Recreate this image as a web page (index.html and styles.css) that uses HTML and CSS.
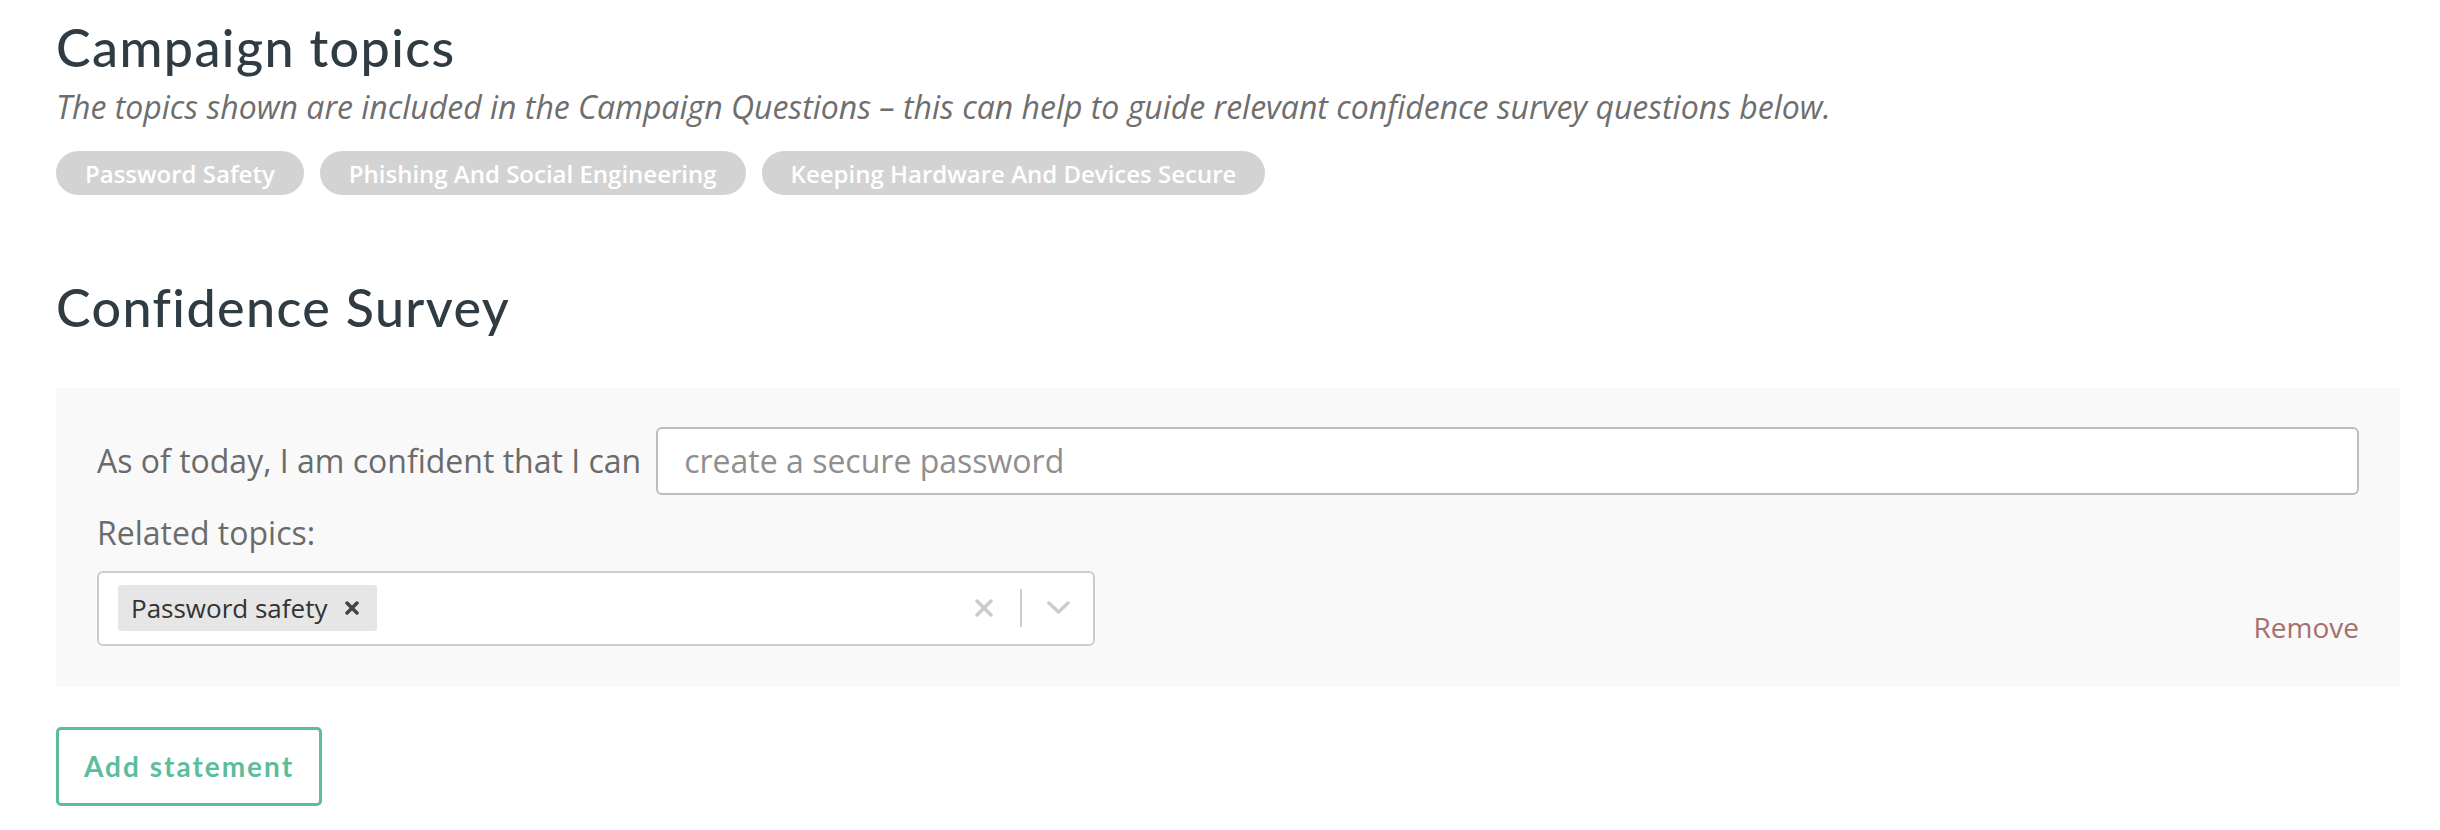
FILE: index.html
```html
<!DOCTYPE html>
<html lang="en">
<head>
  <meta charset="UTF-8">
  <title>Campaign confidence survey</title>
  <meta name="viewport" content="width=device-width, initial-scale=1.0">
  <link rel="stylesheet" href="styles.css">
</head>
<body>
  <div class="page">
    <section class="topics">
      <h2>Campaign topics</h2>
      <p class="hint">The topics shown are included in the Campaign Questions – this can help to guide relevant confidence survey questions below.</p>
      <div class="chips">
        <span class="chip">Password Safety</span>
        <span class="chip">Phishing And Social Engineering</span>
        <span class="chip">Keeping Hardware And Devices Secure</span>
      </div>
    </section>

    <section class="survey">
      <h2>Confidence Survey</h2>

      <div class="statement">
        <div class="statement-row">
          <label for="statement-1">As of today, I am confident that I can</label>
          <input id="statement-1" type="text" placeholder="create a secure password">
        </div>

        <div class="statement-footer">
          <div class="topics-field">
            <div class="field-label">Related topics:</div>
            <div class="select">
              <div class="select-values">
                <span class="tag">
                  <span class="tag-label">Password safety</span>
                  <span class="tag-remove">
                    <svg width="14" height="14" viewBox="0 0 14 14"><path d="M2 2 L12 12 M12 2 L2 12" stroke="#444444" stroke-width="3.5" stroke-linecap="round"/></svg>
                  </span>
                </span>
              </div>
              <div class="select-indicators">
                <span class="indicator">
                  <svg width="18" height="18" viewBox="0 0 18 18"><path d="M2 2 L16 16 M16 2 L2 16" stroke="#cccccc" stroke-width="3.5" stroke-linecap="round"/></svg>
                </span>
                <span class="separator"></span>
                <span class="indicator">
                  <svg width="23" height="14" viewBox="0 0 23 14"><path d="M2 2 L11.5 11 L21 2" fill="none" stroke="#cccccc" stroke-width="3.5" stroke-linecap="round" stroke-linejoin="round"/></svg>
                </span>
              </div>
            </div>
          </div>
          <a class="remove" href="#">Remove</a>
        </div>
      </div>

      <button class="btn-outline" type="button">Add statement</button>
    </section>
  </div>
</body>
</html>
```

FILE: styles.css
```css
:root {
  --ink: #2f3c43;
  --muted: #6b6b6b;
  --line: #cccccc;
  --teal: #5cbd9d;
}

* {
  margin: 0;
  padding: 0;
  box-sizing: border-box;
}

body {
  background: #ffffff;
  font-family: 'Open Sans', sans-serif;
  color: var(--muted);
}

.page {
  padding: 16px 40px 0 56px;
}

h2 {
  font-family: 'Lato', sans-serif;
  font-weight: 500;
  font-size: 52px;
  line-height: 1.2;
  letter-spacing: 1.4px;
  color: var(--ink);
}

.hint {
  margin-top: 7px;
  font-size: 32px;
  font-style: italic;
  color: #6e6e6e;
}

.chips {
  display: flex;
  gap: 16px;
  margin-top: 23px;
}

.chip {
  display: inline-flex;
  align-items: center;
  height: 44px;
  padding: 0 29px;
  border-radius: 22px;
  background: #d3d3d3;
  color: #ffffff;
  font-size: 24px;
  font-weight: 600;
}

.survey {
  margin-top: 81px;
}

/* one statement card */
.statement {
  margin-top: 49px;
  padding: 39px 41px 41px;
  background: #f9f9f9;
}

.statement-row {
  display: flex;
  align-items: center;
  gap: 15px;
}

.statement-row label,
.field-label {
  font-size: 32px;
  color: var(--muted);
  white-space: nowrap;
}

.statement-row input {
  flex: 1;
  height: 68px;
  padding: 0 26px;
  border: 2px solid #bdbdbd;
  border-radius: 6px;
  background: #ffffff;
  font-family: 'Open Sans', sans-serif;
  font-size: 32px;
  color: #333;
  outline: none;
}

.statement-row input::placeholder {
  color: #8f8f8f;
}

.statement-footer {
  display: flex;
  justify-content: space-between;
  align-items: flex-end;
  margin-top: 16px;
}

.topics-field {
  width: 998px;
}

.select {
  display: flex;
  align-items: center;
  height: 75px;
  margin-top: 17px;
  padding: 0 0 0 19px;
  border: 2px solid var(--line);
  border-radius: 6px;
  background: #ffffff;
}

.select-values {
  flex: 1;
  display: flex;
}

.tag {
  display: inline-flex;
  align-items: center;
  height: 46px;
  border-radius: 3px;
  background: #e6e6e6;
  color: #333;
  font-size: 26px;
}

.tag-label {
  padding: 0 0 0 13px;
}

.tag-remove {
  display: flex;
  align-items: center;
  justify-content: center;
  width: 50px;
  height: 100%;
}

.select-indicators {
  display: flex;
  align-items: center;
  height: 100%;
  padding-right: 23px;
}

.indicator {
  display: flex;
  align-items: center;
  justify-content: center;
}

.separator {
  width: 2px;
  height: 38px;
  margin: 0 25px 0 27px;
  background: var(--line);
}

.remove {
  font-size: 28px;
  color: #a5706d;
  text-decoration: none;
}

.btn-outline {
  margin-top: 40px;
  width: 266px;
  height: 79px;
  border: 3px solid var(--teal);
  border-radius: 5px;
  background: #ffffff;
  color: var(--teal);
  font-family: 'Lato', sans-serif;
  font-weight: 700;
  font-size: 28px;
  letter-spacing: 2px;
  cursor: pointer;
}
```
